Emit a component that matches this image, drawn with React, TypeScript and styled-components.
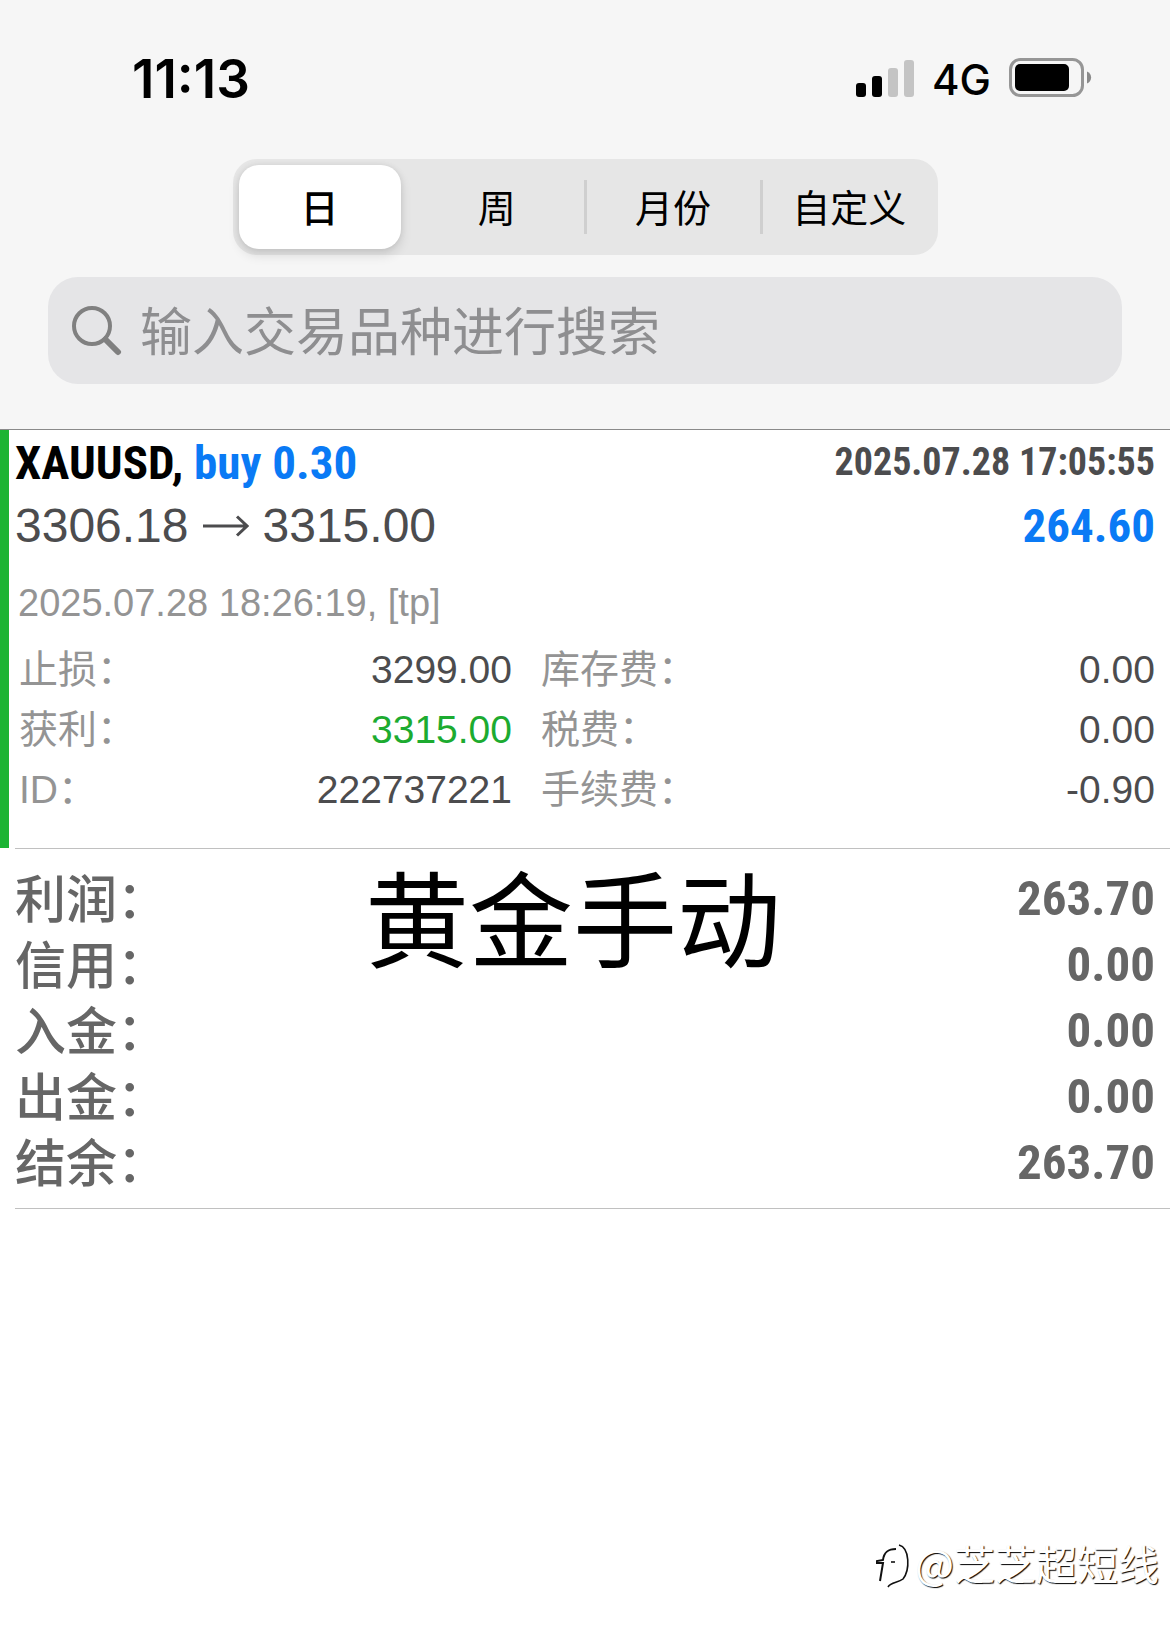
import { useState } from "react";
import styled, { createGlobalStyle } from "styled-components";

const sans = `"Liberation Sans", "Noto Sans CJK SC", sans-serif`;
const narrow = `"Liberation Sans Narrow", "Roboto Condensed", "Liberation Sans", "Noto Sans CJK SC", sans-serif`;
const system = `Inter, "Noto Sans CJK SC", sans-serif`;
const cjk = `"Noto Sans CJK SC", sans-serif`;

const GlobalStyle = createGlobalStyle`
  *, *::before, *::after { box-sizing: border-box; }
  body { margin: 0; background: #fff; font-family: ${sans}; }
`;

const Page = styled.div`
  display: flex;
  flex-direction: column;
  min-height: 100vh;
`;

const Header = styled.header`
  display: flex;
  flex-direction: column;
  background: #f6f6f6;
  border-bottom: 1px solid #8a8a8a;
  padding-bottom: 45px;
`;

const StatusBar = styled.div`
  display: flex;
  justify-content: space-between;
  align-items: center;
  height: 159px;
  padding: 0 78px 4px 132px;
  font-family: ${system};
`;

const Clock = styled.time`
  padding-top: 2px;
  font-size: 53px;
  font-weight: 600;
  line-height: 60px;
`;

const StatusIcons = styled.div`
  display: flex;
  align-items: center;
  gap: 18px;
`;

const Network = styled.span`
  padding-top: 4px;
  font-size: 42px;
  font-weight: 500;
  line-height: 60px;
`;

const Segments = styled.div`
  display: grid;
  grid-template-columns: repeat(4, 1fr);
  align-self: center;
  width: 62%;
  max-width: 705px;
  height: 96px;
  background: #e6e6e6;
  border-radius: 24px;
`;

const Segment = styled.button<{ $active: boolean; $divided: boolean }>`
  display: flex;
  align-items: center;
  justify-content: center;
  position: relative;
  margin: ${(p) => (p.$active ? "6px 8px 6px 6px" : "0")};
  padding: 0 0 3px;
  border: 0;
  border-radius: 20px;
  background: ${(p) => (p.$active ? "#fff" : "transparent")};
  box-shadow: ${(p) => (p.$active ? "0 6px 12px rgba(0, 0, 0, 0.12), 0 0 6px rgba(0, 0, 0, 0.08)" : "none")};
  color: #000;
  font-family: ${cjk};
  font-size: 38px;
  font-weight: ${(p) => (p.$active ? 500 : 400)};
  line-height: 48px;
  white-space: nowrap;

  &::before {
    content: "";
    display: ${(p) => (p.$divided ? "block" : "none")};
    position: absolute;
    left: -1px;
    top: 21px;
    width: 3px;
    height: 54px;
    background: #cfcfcf;
  }
`;

const SearchField = styled.label`
  display: flex;
  align-items: center;
  gap: 18px;
  height: 107px;
  margin: 22px 48px 0;
  padding: 0 24px;
  border-radius: 30px;
  background: #e5e5e7;
`;

const SearchInput = styled.input`
  flex: 1;
  min-width: 0;
  height: 80px;
  padding: 0 0 4px;
  border: 0;
  outline: 0;
  background: transparent;
  color: #000;
  font-family: ${cjk};
  font-size: 52px;

  &::placeholder { color: #8e8e90; opacity: 1; }
`;

const Deal = styled.article`
  display: flex;
  flex-direction: column;
  padding: 1px 15px 28px 6px;
  border-left: 9px solid #1cb434;
  color: #4c4c4e;
`;

const DealLine = styled.div`
  display: flex;
  justify-content: space-between;
  align-items: center;
  height: 63px;
  line-height: 63px;
`;

const Symbol = styled.h2`
  margin: 0;
  color: #000;
  font-family: ${narrow};
  font-size: 47px;
  font-weight: 700;
`;

const Side = styled.span`
  color: #0a7af5;
`;

const OpenTime = styled.time`
  font-family: ${narrow};
  font-size: 38px;
  font-weight: 700;
`;

const Prices = styled.span`
  display: flex;
  align-items: center;
  gap: 14px;
  font-size: 48px;
`;

const DealProfit = styled.strong`
  color: #0a7af5;
  font-family: ${narrow};
  font-size: 47px;
  font-weight: 700;
`;

const CloseNote = styled.p`
  margin: 16px 0 7px 3px;
  color: #949494;
  font-size: 38px;
  line-height: 60px;
`;

const Details = styled.dl`
  display: grid;
  grid-template-columns: 493fr 614fr;
  column-gap: 29px;
  margin: 0 0 0 4px;
`;

const Detail = styled.div`
  display: flex;
  justify-content: space-between;
  height: 60px;
  line-height: 60px;
`;

const DetailName = styled.dt`
  color: #949494;
  font-size: 39px;
`;

const DetailValue = styled.dd<{ $hit?: boolean }>`
  margin: 0;
  color: ${(p) => (p.$hit ? "#1cab30" : "#4c4c4e")};
  font-size: 39px;
`;

const Summary = styled.section`
  position: relative;
  margin-left: 15px;
  padding: 17px 15px 12px 0;
  border-top: 1px solid #c0c0c0;
  border-bottom: 1px solid #c0c0c0;
`;

const Totals = styled.dl`
  margin: 0;
  color: #666;
`;

const Total = styled.div`
  display: flex;
  justify-content: space-between;
  height: 66px;
  line-height: 66px;
`;

const TotalName = styled.dt`
  font-family: ${cjk};
  font-size: 51px;
  font-weight: 500;
  line-height: 60px;
`;

const TotalValue = styled.dd`
  margin: 0;
  font-family: ${narrow};
  font-size: 49px;
  font-weight: 700;
`;

const Caption = styled.p`
  position: absolute;
  left: 350px;
  top: 4px;
  margin: 0;
  color: #000;
  font-family: ${cjk};
  font-size: 104px;
  line-height: 124px;
  white-space: nowrap;
`;

const Watermark = styled.footer`
  display: flex;
  justify-content: flex-end;
  align-items: center;
  gap: 2px;
  margin-top: auto;
  padding: 0 11px 32px 0;
  color: #fff;
  font-family: ${cjk};
  font-size: 41px;
  line-height: 60px;
  text-shadow: 1px 1px 1px #000;
`;

const Author = styled.span`
  padding-bottom: 8px;
`;

function SignalIcon() {
  return (
    <svg width="58" height="38" viewBox="0 0 58 38" aria-hidden="true">
      <rect x="0" y="24" width="10" height="14" rx="3" />
      <rect x="16" y="17" width="10" height="21" rx="3" />
      <rect x="32" y="9" width="10" height="29" rx="3" fill="#c4c4c4" />
      <rect x="48" y="1" width="10" height="37" rx="3" fill="#c4c4c4" />
    </svg>
  );
}

function BatteryIcon() {
  return (
    <svg width="83" height="40" viewBox="0 0 83 40" aria-hidden="true">
      <rect x="1.5" y="1.5" width="72" height="36" rx="10" fill="none" stroke="#969696" strokeWidth="3" />
      <rect x="6" y="6" width="54" height="27" rx="5" />
      <path d="M78 13.500 C83.500 15.500 83.500 23.500 78 25.500 Z" fill="#8a8a8a" />
    </svg>
  );
}

function SearchIcon() {
  return (
    <svg width="50" height="50" viewBox="0 0 50 50" fill="none" stroke="#808080" strokeLinecap="round" aria-hidden="true">
      <circle cx="20" cy="20" r="18" strokeWidth="4" />
      <path d="M33.500 33.500 L46 46" strokeWidth="6" />
    </svg>
  );
}

function ArrowIcon() {
  return (
    <svg width="46" height="22" viewBox="0 0 46 22" fill="none" stroke="#4c4c4e" strokeWidth="3" aria-hidden="true">
      <path d="M0 11 H44 M34 1.500 L44 11 L34 20.500" />
    </svg>
  );
}

function WatermarkLogo() {
  return (
    <svg width="38" height="46" viewBox="0 0 38 46" fill="none" stroke="#111" strokeWidth="1.600" aria-hidden="true">
      <path d="M5 38 L8 20 H2 V18 L8 17 C9 9 13 6 21 6" strokeWidth="2" />
      <path d="M24 2 C35 5 35 27 28 36 C23 40 16 39 13 44" />
      <path d="M16 19 H20" />
    </svg>
  );
}

const periods = ["日", "周", "月份", "自定义"];

const details = [
  { name: "止损：", value: "3299.00" },
  { name: "库存费：", value: "0.00" },
  { name: "获利：", value: "3315.00", hit: true },
  { name: "税费：", value: "0.00" },
  { name: "ID：", value: "222737221" },
  { name: "手续费：", value: "-0.90" },
];

const totals = [
  { name: "利润：", value: "263.70" },
  { name: "信用：", value: "0.00" },
  { name: "入金：", value: "0.00" },
  { name: "出金：", value: "0.00" },
  { name: "结余：", value: "263.70" },
];

export default function App() {
  const [period, setPeriod] = useState(0);

  return (
    <Page lang="zh-CN">
      <GlobalStyle />
      <Header>
        <StatusBar>
          <Clock>11:13</Clock>
          <StatusIcons>
            <SignalIcon />
            <Network>4G</Network>
            <BatteryIcon />
          </StatusIcons>
        </StatusBar>
        <Segments>
          {periods.map((name, i) => (
            <Segment
              key={name}
              type="button"
              aria-pressed={i === period}
              $active={i === period}
              $divided={i > 0 && i !== period && i - 1 !== period}
              onClick={() => setPeriod(i)}
            >
              {name}
            </Segment>
          ))}
        </Segments>
        <SearchField>
          <SearchIcon />
          <SearchInput type="text" placeholder="输入交易品种进行搜索" />
        </SearchField>
      </Header>
      <main>
        <Deal>
          <DealLine>
            <Symbol>
              XAUUSD, <Side>buy 0.30</Side>
            </Symbol>
            <OpenTime>2025.07.28 17:05:55</OpenTime>
          </DealLine>
          <DealLine>
            <Prices>
              <span>3306.18</span>
              <ArrowIcon />
              <span>3315.00</span>
            </Prices>
            <DealProfit>264.60</DealProfit>
          </DealLine>
          <CloseNote>2025.07.28 18:26:19, [tp]</CloseNote>
          <Details>
            {details.map((d) => (
              <Detail key={d.name}>
                <DetailName>{d.name}</DetailName>
                <DetailValue $hit={d.hit}>{d.value}</DetailValue>
              </Detail>
            ))}
          </Details>
        </Deal>
        <Summary>
          <Totals>
            {totals.map((t) => (
              <Total key={t.name}>
                <TotalName>{t.name}</TotalName>
                <TotalValue>{t.value}</TotalValue>
              </Total>
            ))}
          </Totals>
          <Caption>黄金手动</Caption>
        </Summary>
      </main>
      <Watermark>
        <WatermarkLogo />
        <Author>@芝芝超短线</Author>
      </Watermark>
    </Page>
  );
}
